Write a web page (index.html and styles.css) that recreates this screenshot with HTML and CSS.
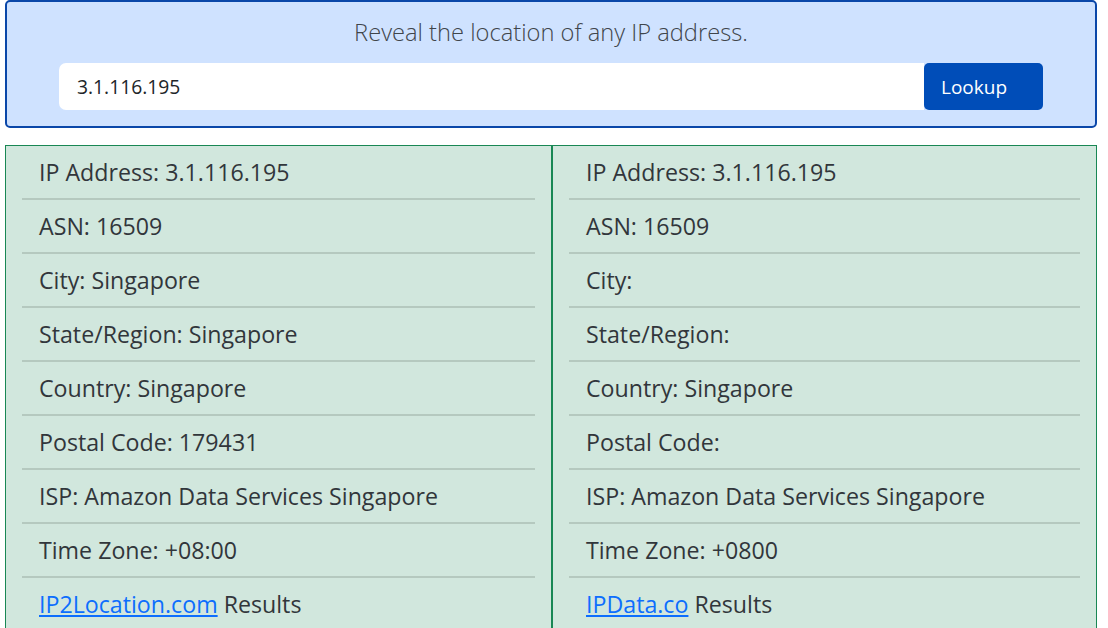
FILE: index.html
```html
<!DOCTYPE html>
<html>
<head>
    <link rel="stylesheet" href="styles.css">
</head>
<body>
    <div class="lookup-box">
        <h1 class="lookup-title">Reveal the location of any IP address.</h1>
        <form class="lookup-form">
            <input type="text" class="lookup-input" value="3.1.116.195">
            <button type="button" class="lookup-button">Lookup</button>
        </form>
    </div>

    <div class="results">
        <ul class="result-list">
            <li>IP Address: 3.1.116.195</li>
            <li>ASN: 16509</li>
            <li>City: Singapore</li>
            <li>State/Region: Singapore</li>
            <li>Country: Singapore</li>
            <li>Postal Code: 179431</li>
            <li>ISP: Amazon Data Services Singapore</li>
            <li>Time Zone: +08:00</li>
            <li><a href="#">IP2Location.com</a>&nbsp;Results</li>
        </ul>
        <ul class="result-list">
            <li>IP Address: 3.1.116.195</li>
            <li>ASN: 16509</li>
            <li>City:</li>
            <li>State/Region:</li>
            <li>Country: Singapore</li>
            <li>Postal Code:</li>
            <li>ISP: Amazon Data Services Singapore</li>
            <li>Time Zone: +0800</li>
            <li><a href="#">IPData.co</a>&nbsp;Results</li>
        </ul>
    </div>
</body>
</html>
```

FILE: styles.css
```css
body {
    font-family: "Open Sans", sans-serif;
    color: #31363b;
    margin: 0;
    padding: 0 11px 0 5px;
}

.lookup-box {
    background-color: #cfe2ff;
    border: 2px solid #0a47a9;
    border-radius: 5px;
    padding: 14px 52px 16px;
    text-align: center;
}

.lookup-title {
    font-size: 23.7px;
    font-weight: 300;
    line-height: 33px;
    color: #3f454b;
    margin: 0 0 14px;
}

.lookup-form {
    display: flex;
    margin: 0;
}

.lookup-input {
    flex: 1;
    height: 47px;
    box-sizing: border-box;
    border: none;
    border-radius: 7px 0 0 7px;
    background-color: #fff;
    padding: 0 18px;
    font-family: inherit;
    font-size: 19.3px;
    color: #212529;
    outline: none;
}

.lookup-button {
    width: 119px;
    height: 47px;
    border: none;
    border-radius: 5px;
    background-color: #004db8;
    color: #fff;
    font-family: inherit;
    font-size: 19px;
    text-align: left;
    padding: 0 17px;
    cursor: pointer;
}

.results {
    display: grid;
    grid-template-columns: 547px 1fr;
    margin-top: 17px;
    background-color: #d1e7dd;
    border: 1px solid #198754;
}

.result-list {
    list-style: none;
    margin: 0;
    padding: 0 16px;
}

.result-list:first-child {
    border-right: 2px solid #198754;
}

.result-list li {
    height: 52px;
    border-bottom: 2px solid #b5c9bf;
    padding-left: 17px;
    display: flex;
    align-items: center;
    font-size: 23.2px;
}

.result-list a {
    color: #0d6efd;
}
```
